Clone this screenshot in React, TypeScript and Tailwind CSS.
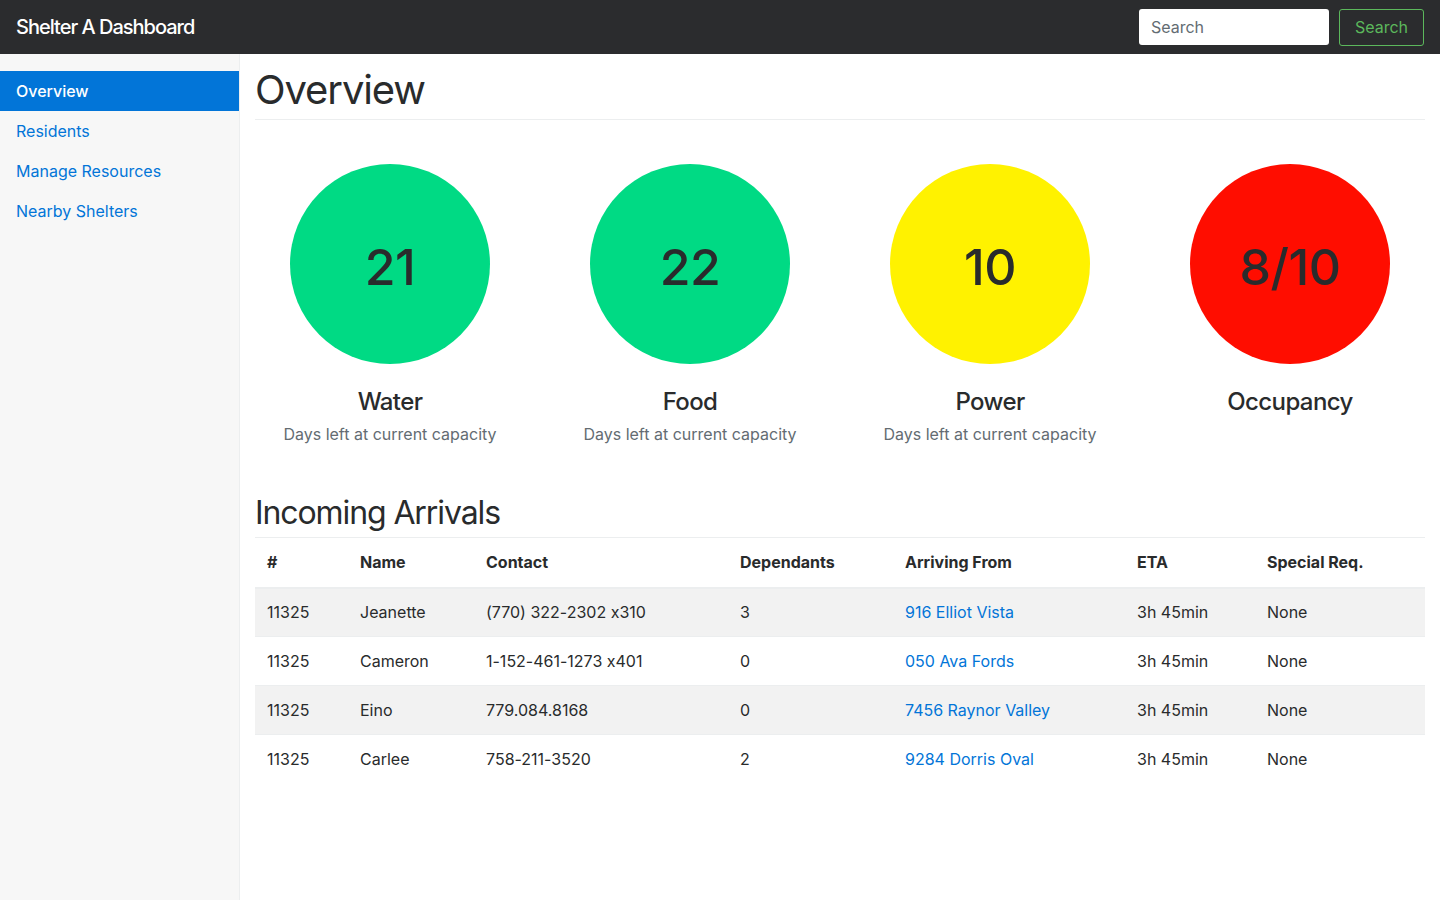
const NAV = ['Overview', 'Residents', 'Manage Resources', 'Nearby Shelters']

const STATS = [
  { value: '21', label: 'Water', sub: 'Days left at current capacity', color: 'bg-[#00da84]' },
  { value: '22', label: 'Food', sub: 'Days left at current capacity', color: 'bg-[#00da84]' },
  { value: '10', label: 'Power', sub: 'Days left at current capacity', color: 'bg-[#fff200]' },
  { value: '8/10', label: 'Occupancy', sub: '', color: 'bg-[#ff0d00]' },
]

const ROWS = [
  ['11325', 'Jeanette', '(770) 322-2302 x310', '3', '916 Elliot Vista', '3h 45min', 'None'],
  ['11325', 'Cameron', '1-152-461-1273 x401', '0', '050 Ava Fords', '3h 45min', 'None'],
  ['11325', 'Eino', '779.084.8168', '0', '7456 Raynor Valley', '3h 45min', 'None'],
  ['11325', 'Carlee', '758-211-3520', '2', '9284 Dorris Oval', '3h 45min', 'None'],
]

const HEADS = ['#', 'Name', 'Contact', 'Dependants', 'Arriving From', 'ETA', 'Special Req.']
const WIDTHS = ['w-[93px]', 'w-[126px]', 'w-[254px]', 'w-[165px]', 'w-[232px]', 'w-[130px]', 'w-[170px]']

export default function App() {
  return (
    <div className="min-h-[900px] bg-white text-[#292b2c] font-['Inter','Liberation_Sans',sans-serif] [font-feature-settings:'calt'_0]">
      <header className="h-[54px] bg-[#2b2c2e] flex items-center justify-between pl-4 pr-4">
        <span className="text-white text-[20px] font-medium tracking-[-1px]">Shelter A Dashboard</span>
        <div className="flex items-center gap-[10px]">
          <input
            placeholder="Search"
            className="w-[190px] h-[36px] rounded-[3px] bg-white px-3 text-[16px] text-[#464a4c] placeholder:text-[#636c72] outline-none"
          />
          <button className="h-[37px] px-[15px] rounded-[3px] border border-[#5cb85c] text-[#5cb85c] text-[16px]">
            Search
          </button>
        </div>
      </header>

      <div className="flex">
        <aside className="w-[240px] min-h-[846px] bg-[#f7f7f7] border-r border-[#eceeef] pt-[17px]">
          {NAV.map((item, i) => (
            <a
              key={item}
              href="#"
              className={`block h-[40px] leading-[40px] px-4 text-[16px] ${
                i === 0 ? 'bg-[#0275d8] text-white font-medium' : 'text-[#0275d8]'
              }`}
            >
              {item}
            </a>
          ))}
        </aside>

        <main className="flex-1 px-[15px] pt-[14px]">
          <h1 className="text-[40px] leading-[44px] pb-[7px] border-b border-[#eceeef] tracking-[-1.1px]">Overview</h1>

          <div className="grid grid-cols-4 -mx-[15px] mt-[44px]">
            {STATS.map(s => (
              <div key={s.label} className="flex flex-col items-center">
                <div className={`w-[200px] h-[200px] rounded-full flex items-center justify-center ${s.color}`}>
                  <span className="mt-[6px] text-[50px] leading-none font-medium tracking-[-0.5px]">{s.value}</span>
                </div>
                <div className="mt-[24px] text-[24px] leading-[28px] font-medium tracking-[-0.6px]">{s.label}</div>
                {s.sub && <div className="mt-[6px] text-[16px] text-[#636c72]">{s.sub}</div>}
              </div>
            ))}
          </div>

          <h2 className="mt-[49px] text-[32px] leading-[36px] tracking-[-1.1px] pb-[6px]">Incoming Arrivals</h2>

          <table className="w-full table-fixed text-[16px] border-collapse">
            <thead>
              <tr>
                {HEADS.map((h, i) => (
                  <th
                    key={h}
                    className={`${WIDTHS[i]} text-left font-bold px-3 h-[50px] border-t border-b-2 border-[#eceeef]`}
                  >
                    {h}
                  </th>
                ))}
              </tr>
            </thead>
            <tbody>
              {ROWS.map((r, ri) => (
                <tr key={ri} className={ri % 2 === 0 ? 'bg-[#f2f2f2]' : ''}>
                  {r.map((c, ci) => (
                    <td key={ci} className="px-3 h-[49px] border-t border-[#eceeef]">
                      {ci === 4 ? <a href="#" className="text-[#0275d8]">{c}</a> : c}
                    </td>
                  ))}
                </tr>
              ))}
            </tbody>
          </table>
        </main>
      </div>
    </div>
  )
}
